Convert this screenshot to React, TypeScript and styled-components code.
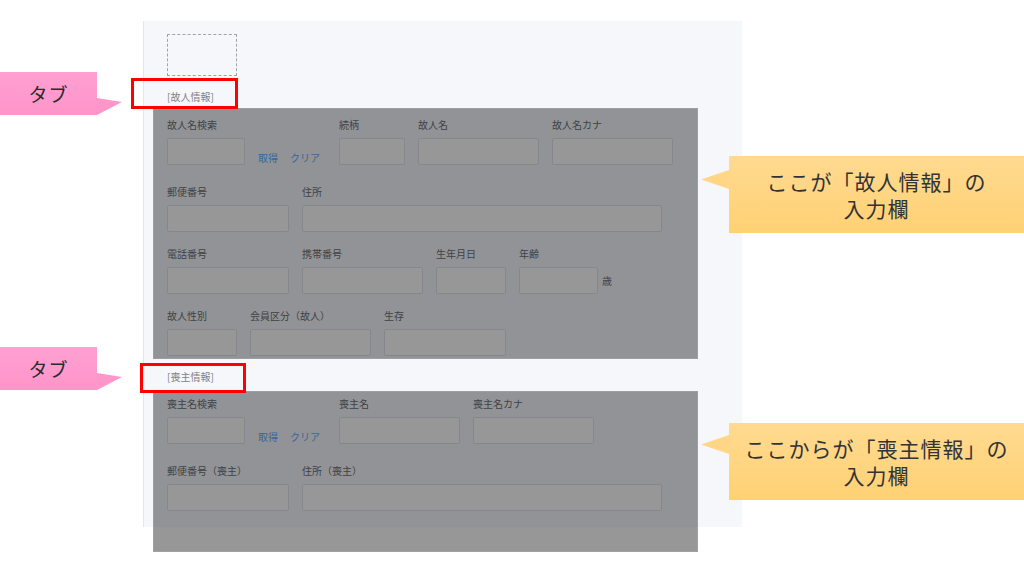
import styled, { createGlobalStyle } from "styled-components";

const GlobalStyle = createGlobalStyle`
  html, body {
    margin: 0;
    padding: 0;
    background: #ffffff;
    overflow: hidden;
  }
  body {
    font-family: "Noto Sans CJK JP", "Noto Sans", sans-serif;
  }
`;

const Page = styled.div`
  position: relative;
  width: 1024px;
  height: 579px;
  box-sizing: border-box;
  padding: 21px 0 0 143px;
  background: #ffffff;
`;

const Panel = styled.div`
  width: 599px;
  height: 506px;
  box-sizing: border-box;
  background: #f5f7fa;
  border-left: 1px solid #e4e7ed;
  padding: 13px 0 0 23px;
`;

const Placeholder = styled.div`
  width: 70px;
  height: 42px;
  box-sizing: border-box;
  border: 1px dashed #a0a3a8;
`;

const TabTitle = styled.div`
  margin-top: 14px;
  font-size: 10px;
  line-height: 14px;
  color: #808288;
  white-space: nowrap;
`;

const Section = styled.div<{ $top: number }>`
  margin-top: ${(p) => p.$top}px;
  display: flex;
  flex-direction: column;
`;

const Row = styled.div<{ $after?: number }>`
  display: flex;
  gap: 13px;
  margin-bottom: ${(p) => p.$after ?? 15}px;
  &:last-child {
    margin-bottom: 0;
  }
`;

const Field = styled.div`
  display: flex;
  flex-direction: column;
`;

const Label = styled.div`
  font-size: 10px;
  line-height: 14px;
  height: 14px;
  margin-bottom: 6px;
  color: #505256;
  white-space: nowrap;
`;

const InputLine = styled.div`
  display: flex;
  align-items: center;
  gap: 4px;
`;

const Input = styled.div<{ $w: number }>`
  width: ${(p) => p.$w}px;
  height: 27px;
  box-sizing: border-box;
  background: #ffffff;
  border: 1px solid #dcdfe6;
  border-radius: 2px;
`;

const Suffix = styled.span`
  font-size: 10px;
  color: #505256;
`;

const Links = styled.div`
  width: 68px;
  align-self: flex-end;
  display: flex;
  font-size: 10px;
  line-height: 14px;
  color: #409eff;
  white-space: nowrap;
  span + span {
    margin-left: 12px;
  }
`;

const Overlay = styled.div<{ $top: number; $h: number }>`
  position: absolute;
  left: 153px;
  top: ${(p) => p.$top}px;
  width: 545px;
  height: ${(p) => p.$h}px;
  background: rgba(48, 48, 50, 0.5);
  box-shadow: inset 0 0 0 1px rgba(255, 255, 255, 0.1);
`;

const RedFrame = styled.div<{ $left: number; $top: number; $w: number; $h: number }>`
  position: absolute;
  left: ${(p) => p.$left}px;
  top: ${(p) => p.$top}px;
  width: ${(p) => p.$w}px;
  height: ${(p) => p.$h}px;
  box-sizing: border-box;
  border: 3px solid #ff0000;
`;

const PinkTag = styled.div<{ $top: number }>`
  position: absolute;
  left: 0;
  top: ${(p) => p.$top}px;
  width: 97px;
  height: 43px;
  background: linear-gradient(#ffa0d2, #ff94c9);
  display: flex;
  align-items: center;
  justify-content: center;
  font-size: 19px;
  color: #2a2a2a;
  letter-spacing: 1px;
  &::after {
    content: "";
    position: absolute;
    left: 97px;
    top: 26px;
    width: 25px;
    height: 17px;
    background: #ff96ca;
    clip-path: polygon(0 0, 100% 23%, 0 100%);
  }
`;

const YellowNote = styled.div<{ $top: number; $pTop: number }>`
  position: absolute;
  left: 729px;
  top: ${(p) => p.$top}px;
  width: 295px;
  height: 77px;
  background: linear-gradient(#ffda90, #ffd174);
  display: flex;
  flex-direction: column;
  align-items: center;
  justify-content: center;
  font-size: 21px;
  line-height: 27px;
  color: #333333;
  letter-spacing: 1px;
  &::before {
    content: "";
    position: absolute;
    left: -28px;
    top: ${(p) => p.$pTop}px;
    width: 28px;
    height: 19px;
    background: #ffd686;
    clip-path: polygon(100% 0, 0 50%, 100% 100%);
  }
`;

const SearchRow = ({ label, fields }: { label: string; fields: [string, number][] }) => (
  <Row $after={20}>
    <Field>
      <Label>{label}</Label>
      <Input $w={78} />
    </Field>
    <Links>
      <span>取得</span>
      <span>クリア</span>
    </Links>
    {fields.map(([l, w]) => (
      <Field key={l}>
        <Label>{l}</Label>
        <Input $w={w} />
      </Field>
    ))}
  </Row>
);

const PlainRow = ({ fields }: { fields: [string, number][] }) => (
  <Row>
    {fields.map(([l, w]) => (
      <Field key={l}>
        <Label>{l}</Label>
        <Input $w={w} />
      </Field>
    ))}
  </Row>
);

export default function App() {
  return (
    <>
      <GlobalStyle />
      <Page>
        <Panel>
          <Placeholder />
          <TabTitle>[故人情報]</TabTitle>
          <Section $top={14}>
            <SearchRow
              label="故人名検索"
              fields={[
                ["続柄", 66],
                ["故人名", 121],
                ["故人名カナ", 121],
              ]}
            />
            <PlainRow
              fields={[
                ["郵便番号", 122],
                ["住所", 360],
              ]}
            />
            <Row>
              <Field>
                <Label>電話番号</Label>
                <Input $w={122} />
              </Field>
              <Field>
                <Label>携帯番号</Label>
                <Input $w={121} />
              </Field>
              <Field>
                <Label>生年月日</Label>
                <Input $w={70} />
              </Field>
              <Field>
                <Label>年齢</Label>
                <InputLine>
                  <Input $w={79} />
                  <Suffix>歳</Suffix>
                </InputLine>
              </Field>
            </Row>
            <PlainRow
              fields={[
                ["故人性別", 70],
                ["会員区分（故人）", 121],
                ["生存", 122],
              ]}
            />
          </Section>
          <TabTitle>[喪主情報]</TabTitle>
          <Section $top={13}>
            <SearchRow
              label="喪主名検索"
              fields={[
                ["喪主名", 121],
                ["喪主名カナ", 121],
              ]}
            />
            <PlainRow
              fields={[
                ["郵便番号（喪主）", 122],
                ["住所（喪主）", 360],
              ]}
            />
          </Section>
        </Panel>

        <Overlay $top={108} $h={251} />
        <Overlay $top={391} $h={161} />

        <RedFrame $left={131} $top={78} $w={107} $h={31} />
        <RedFrame $left={140} $top={363} $w={106} $h={30} />

        <PinkTag $top={72}>タブ</PinkTag>
        <PinkTag $top={347}>タブ</PinkTag>

        <YellowNote $top={156} $pTop={14}>
          <div>ここが「故人情報」の</div>
          <div>入力欄</div>
        </YellowNote>
        <YellowNote $top={423} $pTop={12}>
          <div>ここからが「喪主情報」の</div>
          <div>入力欄</div>
        </YellowNote>
      </Page>
    </>
  );
}
